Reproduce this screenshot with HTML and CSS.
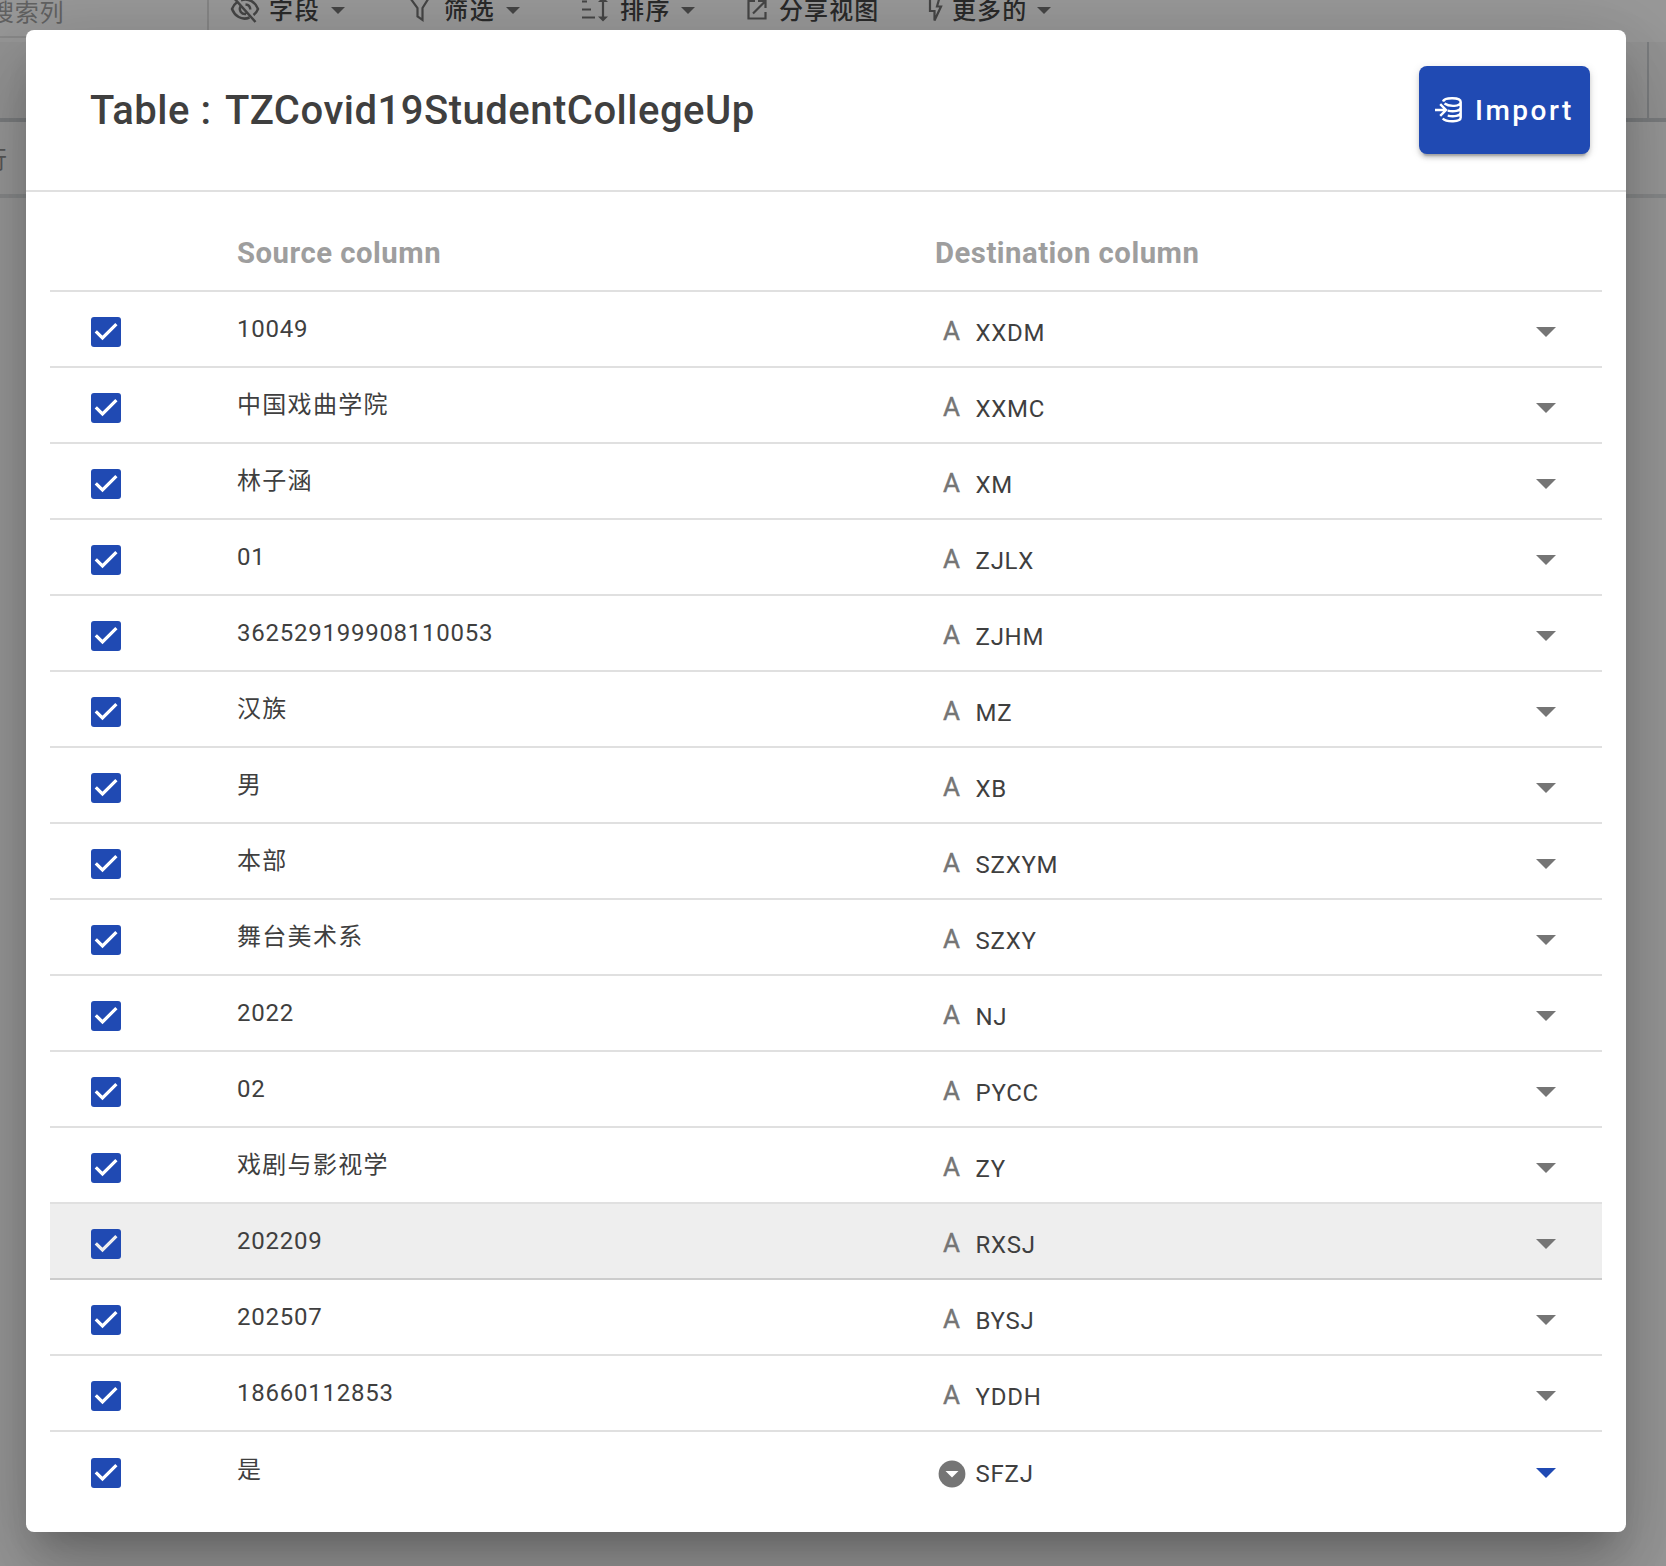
FILE: index.html
```html
<!DOCTYPE html>
<html lang="zh-CN">
<head>
<meta charset="utf-8">
<title>Import</title>
<link rel="stylesheet" href="styles.css">
</head>
<body>
<svg class="defs" width="0" height="0" aria-hidden="true">
  <symbol id="check" viewBox="0 0 30 30"><path d="M4.800 14.300 11.500 20.900 25.400 7.200" fill="none" stroke="currentColor" stroke-width="3.200"/></symbol>
  <symbol id="caret" viewBox="0 0 20 10"><path d="M0 0h20L10 10z" fill="currentColor"/></symbol>
</svg>
<div class="app">
  <div class="toolbar">
    <div class="search">搜索列</div>
    <div class="tool fields"><svg width="30" height="28" viewBox="0 0 30 28" fill="none" stroke="currentColor" stroke-width="2.500"><path d="M11 4.200C19 1.500 25.500 6.500 28 13c-1 2.500-2.500 4.500-4.500 6M19.500 21.500C11.500 25 4.500 19.500 2 13c1-2.500 2.500-5 5-6.700M3.500 1.500 25.500 26M10.500 10.500c-2 4 1 8 5.500 7.500M15.500 8.500c3 .2 4.700 2.200 4.800 5"/></svg><span>字段</span><svg class="caret" width="14" height="7"><use href="#caret"/></svg></div>
    <div class="tool filter"><svg width="22" height="26" viewBox="0 0 22 26" fill="none" stroke="currentColor" stroke-width="2.2"><path d="M1.500 1.500h18l-6 9.500V23l-5-3.500V11z"/></svg><span>筛选</span><svg class="caret" width="14" height="7"><use href="#caret"/></svg></div>
    <div class="tool sort"><svg width="28" height="26" viewBox="0 0 28 26" fill="none" stroke="currentColor" stroke-width="2.200"><path d="M0 4.500h5M0 12.500h9M0 20.500h13M21 3v18"/><path d="M16 5 21 0l5 5zM16 19.500 21 24.500l5-5z" fill="currentColor" stroke="none"/></svg><span>排序</span><svg class="caret" width="14" height="7"><use href="#caret"/></svg></div>
    <div class="tool share"><svg width="20" height="24" viewBox="0 0 20 24" fill="none" stroke="currentColor" stroke-width="2.200"><path d="M8 3H1.500v17.500h17V14M11 3h7.500v7M18.500 3 6 15.500"/></svg><span>分享视图</span></div>
    <div class="tool more"><svg width="16" height="28" viewBox="0 0 16 28" fill="none" stroke="currentColor" stroke-width="2.200"><path d="M3 0v15h4.500v9.500L14 10.500h-4L13 0z"/></svg><span>更多的</span><svg class="caret" width="14" height="7"><use href="#caret"/></svg></div>
  </div>
  <div class="gridhead"><div class="gridcell"></div></div>
  <div class="gridrow">行</div>
</div>
<div class="overlay">
  <div class="dialog">
    <div class="head">
      <h1>Table : <span>TZCovid19StudentCollegeUp</span></h1>
      <button class="import"><svg width="28" height="28" viewBox="0 0 28 28" fill="none" stroke="currentColor" stroke-width="2.400"><path d="M8 5.500C9.500 1 25.700 1 25.700 6S14 10.800 9.500 7.600M25.700 6v15.500c0 4.800-14 5-18 1M25.700 11.500c0 3.500-7 4.600-13 3.200M25.700 16.500c0 3.500-7 4.600-13 3.200M0 14h11M5.200 8.200 11 14l-5.800 5.800"/></svg><span>Import</span></button>
    </div>
    <div class="table" id="table">
      <div class="row th"><div class="pick"></div><div class="src">Source column</div><div class="dst">Destination column</div></div>
    </div>
  </div>
</div>
<script src="table.js"></script>
</body>
</html>
```
FILE: styles.css
```css
* { box-sizing: border-box; }
body { margin: 0; background: #fff; color: #3f3f3f; font-family: Roboto, "Noto Sans CJK SC", sans-serif; height: 1566px; overflow: hidden; position: relative; }
.defs { position: absolute; }
.toolbar { height: 42px; display: flex; color: #666; position: relative; }
.search { width: 209px; height: 38px; border-right: 2px solid #ddd; border-bottom: 2px solid #e4e4e4; font-size: 24px; line-height: 26px; color: #9a9a9a; text-indent: -10px; letter-spacing: .75px; }
.tool { position: absolute; top: -4px; height: 28px; display: flex; align-items: center; font-weight: 500; font-size: 24px; line-height: 28px; letter-spacing: 1.4px; white-space: nowrap; }
.tool span { color: #333; position: relative; top: 1px; }
.tool .caret { margin-left: 10px; }
.fields { left: 230px; }
.fields span { margin-left: 9px; letter-spacing: 1.8px; }
.filter { left: 409px; }
.filter span { margin-left: 13px; letter-spacing: 1.8px; }
.sort { left: 582px; }
.sort span { margin-left: 10px; }
.share { left: 747px; }
.share span { margin-left: 12px; letter-spacing: 1.1px; }
.more { left: 927px; }
.more span { margin-left: 9px; letter-spacing: 1.1px; }
.gridhead { height: 80px; background: #f5f5f5; border-bottom: 4px solid #c9cdd1; display: flex; justify-content: flex-end; }
.gridcell { width: 19px; height: 80px; border-left: 2px solid #c9cdd1; }
.gridrow { height: 76px; border-bottom: 4px solid #e0e3e6; font-size: 24px; line-height: 76px; text-indent: -17px; color: #888; }
.overlay { position: absolute; inset: 0; background: rgba(33,33,33,.46); padding: 30px 0 0 26px; }
.dialog { width: 1600px; height: 1502px; background: #fff; border-radius: 8px; box-shadow: 0 22px 30px -14px rgba(0,0,0,.2), 0 48px 76px 6px rgba(0,0,0,.14), 0 18px 92px 16px rgba(0,0,0,.12); }
.head { height: 162px; border-bottom: 2px solid #e0e0e0; display: flex; align-items: center; justify-content: space-between; padding: 0 36px 0 64px; }
h1 { margin: 0; padding-top: 2px; font-size: 40px; font-weight: 500; letter-spacing: .5px; line-height: 60px; }
h1 span { margin-left: 3px; }
.import { width: 171px; height: 88px; border: 0; border-radius: 8px; background: #204ab3; color: #fff; font: 500 28px Roboto, sans-serif; letter-spacing: 2.5px; padding: 0 0 0 16px; display: flex; align-items: center; gap: 12px; box-shadow: 0 6px 2px -4px rgba(0,0,0,.2), 0 4px 4px rgba(0,0,0,.14), 0 2px 10px rgba(0,0,0,.12); }
.table { margin: 0 24px; }
.row { display: grid; grid-template-columns: 187px 698px 1fr; height: 76px; border-bottom: 2px solid #e0e0e0; font-size: 24px; letter-spacing: .75px; }
.row.th { height: 100px; font-size: 29.3px; font-weight: 700; color: #9e9e9e; letter-spacing: .5px; line-height: 122px; }
.row.hover { background: #eee; border-color: #ccc; }
.row.last { border: 0; padding-top: 1px; }
.pick { padding: 25px 0 0 41px; }
.box { width: 30px; height: 30px; border-radius: 3px; background: #204ab3; color: #fff; display: block; }
.hover .box { color: #eee; }
.td.src { line-height: 74px; }
.td.src:lang(zh) { letter-spacing: 1.3px; }
.td.dst { display: flex; align-items: center; padding: 8px 46px 0 0; }
.last .td.dst { padding-top: 6px; }
.type { width: 33px; margin: -5px 7.5px 0 0; color: #757575; font-size: 26px; letter-spacing: 0; display: flex; justify-content: center; -webkit-text-stroke: .4px #757575; }
.last .type { margin-top: 1px; }
.name { flex: 1; }
.arrow { color: #757575; margin-top: -3px; }
.last .arrow { color: #204ab3; margin-top: -1px; }
```
FILE: table.js
```js
const rows = [
  ["10049", "XXDM"], ["中国戏曲学院", "XXMC"], ["林子涵", "XM"], ["01", "ZJLX"],
  ["362529199908110053", "ZJHM"], ["汉族", "MZ"], ["男", "XB"], ["本部", "SZXYM"],
  ["舞台美术系", "SZXY"], ["2022", "NJ"], ["02", "PYCC"], ["戏剧与影视学", "ZY"],
  ["202209", "RXSJ"], ["202507", "BYSJ"], ["18660112853", "YDDH"], ["是", "SFZJ"]
];
const select = '<svg width="28" height="28" viewBox="0 0 28 28"><circle cx="14" cy="14" r="13.400" fill="currentColor"/><path d="M7.500 11h13L14 17.600z" fill="#fff"/></svg>';
document.getElementById("table").insertAdjacentHTML("beforeend", rows.map(([src, dst], i) => {
  const state = i === 12 ? " hover" : i === 15 ? " last" : "";
  const lang = /^\d/.test(src) ? "en" : "zh-CN";
  return `<div class="row${state}"><div class="pick"><svg class="box"><use href="#check"/></svg></div>
    <div class="td src" lang="${lang}">${src}</div>
    <div class="td dst"><span class="type">${i === 15 ? select : "A"}</span><span class="name">${dst}</span><svg class="arrow" width="20" height="10"><use href="#caret"/></svg></div></div>`;
}).join(""));
```
